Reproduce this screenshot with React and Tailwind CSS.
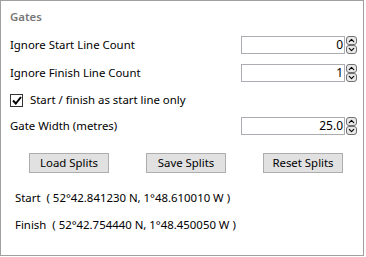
import { ChevronUp, ChevronDown } from 'lucide-react';

function Spinner({ value }) {
  return (
    <div className="flex items-center">
      <div className="w-[104px] h-[18px] border border-[#abadb3] bg-white flex items-center justify-end pr-[1px] text-[12px] leading-none">
        {value}
      </div>
      <div className="flex flex-col ml-[1px]">
        <div className="w-[11px] h-[9px] border border-[#707070] rounded-[3px] bg-[#e8e8e8] flex items-center justify-center">
          <ChevronUp size={9} strokeWidth={3} />
        </div>
        <div className="w-[11px] h-[9px] border border-[#707070] rounded-[3px] bg-[#e8e8e8] flex items-center justify-center">
          <ChevronDown size={9} strokeWidth={3} />
        </div>
      </div>
    </div>
  );
}

function Row({ label, value, className = '' }) {
  return (
    <div className={`flex items-center justify-between h-[18px] ${className}`}>
      <span>{label}</span>
      <Spinner value={value} />
    </div>
  );
}

export default function App() {
  const botones = ['Load Splits', 'Save Splits', 'Reset Splits'];
  return (
    <div className="w-[366px] h-[257px] bg-white font-['Noto_Sans',sans-serif] text-[11.4px] text-black">
      <div className="w-[364px] h-[256px] border border-[#a0a0a0] pl-[9px] pr-[6px]">
        <div className="pt-[8px] font-semibold text-[#777] leading-[16px]">Gates</div>

        {/* filas */}
        <div className="mt-[11px] flex flex-col">
          <Row label="Ignore Start Line Count" value="0" />
          <Row label="Ignore Finish Line Count" value="1" className="mt-[10px]" />
          <div className="flex items-center h-[18px] mt-[9px]">
            <div className="w-[13px] h-[13px] border border-[#333] flex items-center justify-center">
              <svg width="10" height="9" viewBox="0 0 10 9">
                <path d="M1 4.5 L3.8 7.5 L9 1" stroke="#000" strokeWidth="2" fill="none" />
              </svg>
            </div>
            <span className="ml-[7px]">Start / finish as start line only</span>
          </div>
          <Row label="Gate Width (metres)" value="25.0" className="mt-[8px]" />
        </div>

        {/* botones */}
        <div className="mt-[18px] flex pl-[19px] gap-[37px]">
          {botones.map((b) => (
            <div
              key={b}
              className="w-[80px] h-[20px] border border-[#adadad] bg-[#e1e1e1] flex items-center justify-center"
            >
              {b}
            </div>
          ))}
        </div>

        <div className="mt-[17px] pl-[5px] flex flex-col gap-[11px] leading-[16px]">
          <div>Start&nbsp; ( 52°42.841230 N, 1°48.610010 W )</div>
          <div>Finish&nbsp; ( 52°42.754440 N, 1°48.450050 W )</div>
        </div>
      </div>
    </div>
  );
}
